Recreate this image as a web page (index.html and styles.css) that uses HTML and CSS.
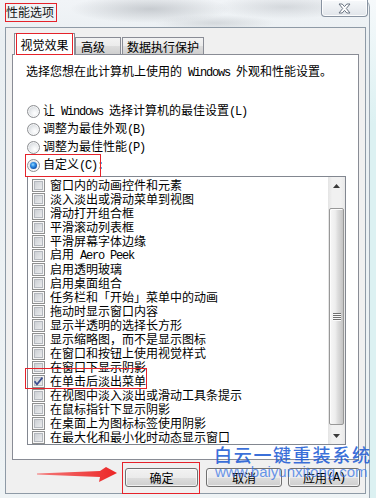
FILE: index.html
```html
<!DOCTYPE html>
<html lang="zh-CN">
<head>
<meta charset="utf-8">
<title>性能选项</title>
<link rel="stylesheet" href="styles.css">
</head>
<body>
<div class="frame">
  <div class="titlebar">
    <span class="title">性能选项</span>
    <div class="close">
      <svg width="13" height="11" viewBox="0 0 13 11"><polygon points="1,1 4.2,1 6.5,3.6 8.8,1 12,1 8.3,5.5 12,10 8.8,10 6.5,7.4 4.2,10 1,10 4.7,5.5" fill="#fff" stroke="#6a7482" stroke-width="1" stroke-linejoin="round"/></svg>
    </div>
  </div>
  <div class="client">
    <div class="tabs">
      <div class="tab active">视觉效果</div>
      <div class="tab t2">高级</div>
      <div class="tab t3">数据执行保护</div>
    </div>
    <div class="panel">
      <p class="intro">选择您想在此计算机上使用的<span class="en"> Windows </span>外观和性能设置。</p>
      <div class="radios">
        <div class="radio"><span class="rb"></span><span>让<span class="en"> Windows </span>选择计算机的最佳设置<span class="en">(L)</span></span></div>
        <div class="radio"><span class="rb"></span><span>调整为最佳外观<span class="en">(B)</span></span></div>
        <div class="radio"><span class="rb"></span><span>调整为最佳性能<span class="en">(P)</span></span></div>
        <div class="radio"><span class="rb on"><span class="dot"></span></span><span>自定义<span class="en">(C):</span></span></div>
      </div>
      <div class="list">
        <div class="items">
          <div class="item"><span class="cb"></span><span>窗口内的动画控件和元素</span></div>
          <div class="item"><span class="cb"></span><span>淡入淡出或滑动菜单到视图</span></div>
          <div class="item"><span class="cb"></span><span>滑动打开组合框</span></div>
          <div class="item"><span class="cb"></span><span>平滑滚动列表框</span></div>
          <div class="item"><span class="cb"></span><span>平滑屏幕字体边缘</span></div>
          <div class="item"><span class="cb"></span><span>启用<span class="en"> Aero Peek</span></span></div>
          <div class="item"><span class="cb"></span><span>启用透明玻璃</span></div>
          <div class="item"><span class="cb"></span><span>启用桌面组合</span></div>
          <div class="item"><span class="cb"></span><span>任务栏和「开始」菜单中的动画</span></div>
          <div class="item"><span class="cb"></span><span>拖动时显示窗口内容</span></div>
          <div class="item"><span class="cb"></span><span>显示半透明的选择长方形</span></div>
          <div class="item"><span class="cb"></span><span>显示缩略图，而不是显示图标</span></div>
          <div class="item"><span class="cb"></span><span>在窗口和按钮上使用视觉样式</span></div>
          <div class="item"><span class="cb"></span><span>在窗口下显示阴影</span></div>
          <div class="item"><span class="cb checked"><svg width="11" height="11" viewBox="0 0 11 11"><path d="M1.6 5.2 L4 8.4 L9.4 1.6" fill="none" stroke="#3a4d8f" stroke-width="1.7"/></svg></span><span>在单击后淡出菜单</span></div>
          <div class="item"><span class="cb"></span><span>在视图中淡入淡出或滑动工具条提示</span></div>
          <div class="item"><span class="cb"></span><span>在鼠标指针下显示阴影</span></div>
          <div class="item"><span class="cb"></span><span>在桌面上为图标标签使用阴影</span></div>
          <div class="item"><span class="cb"></span><span>在最大化和最小化时动态显示窗口</span></div>
        </div>
        <div class="scrollbar">
          <div class="sb-btn"><svg width="7" height="4" viewBox="0 0 7 4"><polygon points="0,4 3.5,0 7,4" fill="#3a3a3a"/></svg></div>
          <div class="sb-track"><div class="thumb"><span class="grip"></span></div></div>
          <div class="sb-btn"><svg width="7" height="4" viewBox="0 0 7 4"><polygon points="0,0 7,0 3.5,4" fill="#3a3a3a"/></svg></div>
        </div>
      </div>
    </div>
    <div class="buttons">
      <div class="btn ok">确定</div>
      <div class="btn cancel">取消</div>
      <div class="btn apply">应用<span class="en">(A)</span></div>
    </div>
  </div>

  <div class="mark m-title"></div>
  <div class="mark m-tab"></div>
  <div class="mark m-radio"></div>
  <div class="mark m-check"></div>
  <div class="mark m-ok"></div>
  <svg class="arrow" width="95" height="26" viewBox="0 0 95 26">
    <defs>
      <linearGradient id="ag" x1="0" y1="0" x2="1" y2="0">
        <stop offset="0" stop-color="#f47a7a"/>
        <stop offset="1" stop-color="#ec2626"/>
      </linearGradient>
    </defs>
    <polygon points="7,11.4 70,9 76,5 87,11 69,20 70,15 7,12.4" fill="url(#ag)"/>
  </svg>
  <div class="wm-cn">白云一键重装系统</div>
  <div class="wm-url">www.baiyunxitong.com</div>
</div>
</body>
</html>
```

FILE: styles.css
```css
* { box-sizing: border-box; }
html, body { margin: 0; padding: 0; }
body {
  width: 376px;
  height: 498px;
  overflow: hidden;
  background: linear-gradient(#f6f9fb, #dcf1f2 25%, #dcf1f2);
  font-family: "Noto Sans CJK SC", sans-serif;
  font-size: 12px;
  color: #000;
}
.en {
  font-family: "Liberation Mono", monospace;
  font-size: 12px;
  letter-spacing: -1.2px;
}
.frame {
  position: relative;
  width: 370px;
  height: 498px;
  border-right: 1px solid #9aa5b0;
  border-top-right-radius: 7px;
  background:
    radial-gradient(ellipse 80px 14px at 150px 9px, rgba(150,155,162,.45), rgba(150,155,162,0)),
    radial-gradient(ellipse 70px 12px at 285px 7px, rgba(160,165,172,.35), rgba(160,165,172,0)),
    radial-gradient(ellipse 60px 8px at 215px 23px, rgba(165,170,176,.35), rgba(165,170,176,0)),
    linear-gradient(#f1f4f7, #eaeff2 40px, #eef3f5);
}
.titlebar {
  display: flex;
  align-items: flex-start;
  height: 27px;
  padding-left: 6px;
}
.title {
  margin-top: 5px;
  line-height: 14px;
  color: #151515;
}
.close {
  margin-left: auto;
  margin-right: 1px;
  width: 47px;
  height: 17px;
  border: 1px solid #8893a1;
  border-top: none;
  border-radius: 0 0 4px 4px;
  background: linear-gradient(#f7f9fb, #e1e5ea);
  box-shadow: inset 0 0 0 1px rgba(255,255,255,.85);
  display: flex;
  align-items: center;
  justify-content: center;
}
.client {
  margin-left: 5px;
  width: 361px;
  height: 467px;
  border: 1px solid #8e9aa6;
  background: #f0f0f0;
  padding-top: 5px;
}
.tabs {
  position: relative;
  z-index: 2;
  display: flex;
  align-items: flex-end;
  height: 21px;
  padding-left: 8px;
}
.tab {
  border: 1px solid #898c95;
  border-bottom: none;
  line-height: 14px;
  white-space: nowrap;
}
.tab.active {
  width: 61px;
  height: 22px;
  margin-bottom: -1px;
  padding-top: 4px;
  text-align: center;
  background: #fff;
}
.tab.t2, .tab.t3 {
  height: 17px;
  padding-top: 2px;
  background: linear-gradient(#f3f3f3 0%, #ebebeb 50%, #dddddd 50%, #cfcfcf 100%);
}
.tab.t2 { width: 46px; padding-left: 5px; }
.tab.t3 { width: 82px; padding-left: 4px; margin-left: 1px; }
.panel {
  position: relative;
  z-index: 1;
  margin-left: 6px;
  width: 347px;
  height: 406px;
  border: 1px solid #898c95;
  background: #fff;
  padding: 9px 0 0 13px;
}
.intro {
  margin: 0;
  height: 14px;
  line-height: 14px;
  white-space: nowrap;
}
.radios { margin-top: 24px; }
.radio {
  display: flex;
  align-items: center;
  gap: 3px;
  height: 18px;
  padding-left: 1px;
  line-height: 14px;
  white-space: nowrap;
}
.rb {
  flex: none;
  width: 13px;
  height: 13px;
  border-radius: 50%;
  border: 1px solid #8e9093;
  background: radial-gradient(circle at 62% 66%, #ffffff 0, #eef0f2 35%, #c6cacf 100%);
  box-shadow: inset 0 0 0 1px rgba(250,250,250,.8);
  display: flex;
  align-items: center;
  justify-content: center;
}
.dot {
  width: 7px;
  height: 7px;
  border-radius: 50%;
  background: radial-gradient(circle at 42% 38%, #9bdcff 0, #3a97ea 30%, #0f55b0 70%, #0a357a 100%);
}
.list {
  margin-top: 2px;
  margin-left: 1px;
  width: 319px;
  height: 269px;
  border: 1px solid #828790;
  background: #fff;
  display: flex;
}
.items {
  flex: 1;
  padding-top: 1px;
}
.item {
  display: flex;
  align-items: center;
  gap: 5px;
  height: 14px;
  padding-left: 4px;
  line-height: 14px;
  white-space: nowrap;
}
.cb {
  flex: none;
  width: 13px;
  height: 13px;
  border: 1px solid #8e8f8f;
  background: linear-gradient(135deg, #c4c8cd, #f2f3f4);
  box-shadow: inset 0 0 0 1px #f6f6f6, inset 0 0 0 2px #b4b8be;
  display: flex;
}
.cb svg { display: block; }
.scrollbar {
  width: 17px;
  display: flex;
  flex-direction: column;
  background: linear-gradient(to right, #e4e4e4, #f1f1f1 25%, #f1f1f1 75%, #e8e8e8);
}
.sb-btn {
  height: 17px;
  display: flex;
  align-items: center;
  justify-content: center;
}
.sb-track {
  flex: 1;
  padding: 14px 1px 2px;
}
.thumb {
  height: 100%;
  border: 1px solid #989898;
  border-radius: 2px;
  background: linear-gradient(to right, #f7f7f7 0%, #eeeeee 40%, #dddddd 60%, #c4c4c4 100%);
  box-shadow: inset 1px 1px 0 #fcfcfc;
  display: flex;
  align-items: center;
  justify-content: center;
}
.grip {
  width: 8px;
  height: 8px;
  background: repeating-linear-gradient(#707070 0, #707070 1px, #fafafa 1px, #fafafa 2px);
}
.buttons {
  display: flex;
  justify-content: flex-end;
  margin-top: 8px;
  padding-right: 5px;
}
.btn {
  height: 19px;
  border: 1px solid #707070;
  border-radius: 3px;
  background: linear-gradient(#f2f2f2 0%, #ebebeb 50%, #dddddd 50%, #cfcfcf 100%);
  box-shadow: inset 0 0 0 1px rgba(255,255,255,.7);
  display: flex;
  align-items: center;
  justify-content: center;
  line-height: 14px;
  white-space: nowrap;
}
.btn.ok { width: 73px; }
.btn.cancel { width: 76px; margin-left: 8px; }
.btn.apply { width: 72px; margin-left: 6px; }

.mark {
  position: absolute;
  z-index: 5;
  border: 1px solid #e5222a;
  pointer-events: none;
}
.m-title { left: 5px; top: 3px; width: 52px; height: 19px; }
.m-tab { left: 16px; top: 33px; width: 57px; height: 22px; }
.m-radio { left: 25px; top: 154px; width: 76px; height: 23px; }
.m-check { left: 25px; top: 368px; width: 122px; height: 21px; }
.m-ok { left: 122px; top: 462px; width: 78px; height: 32px; }
.arrow {
  position: absolute;
  z-index: 5;
  left: 30px;
  top: 462px;
}
.wm-cn {
  position: absolute;
  z-index: 6;
  left: 214px;
  top: 444px;
  font-size: 18px;
  line-height: 20px;
  letter-spacing: 1.7px;
  font-weight: 500;
  color: rgba(32, 92, 212, .88);
  white-space: nowrap;
}
.wm-url {
  position: absolute;
  z-index: 6;
  left: 215px;
  top: 464px;
  font-family: "Liberation Sans", sans-serif;
  font-size: 15px;
  line-height: 15px;
  color: rgba(45, 110, 230, .72);
  white-space: nowrap;
}
```
